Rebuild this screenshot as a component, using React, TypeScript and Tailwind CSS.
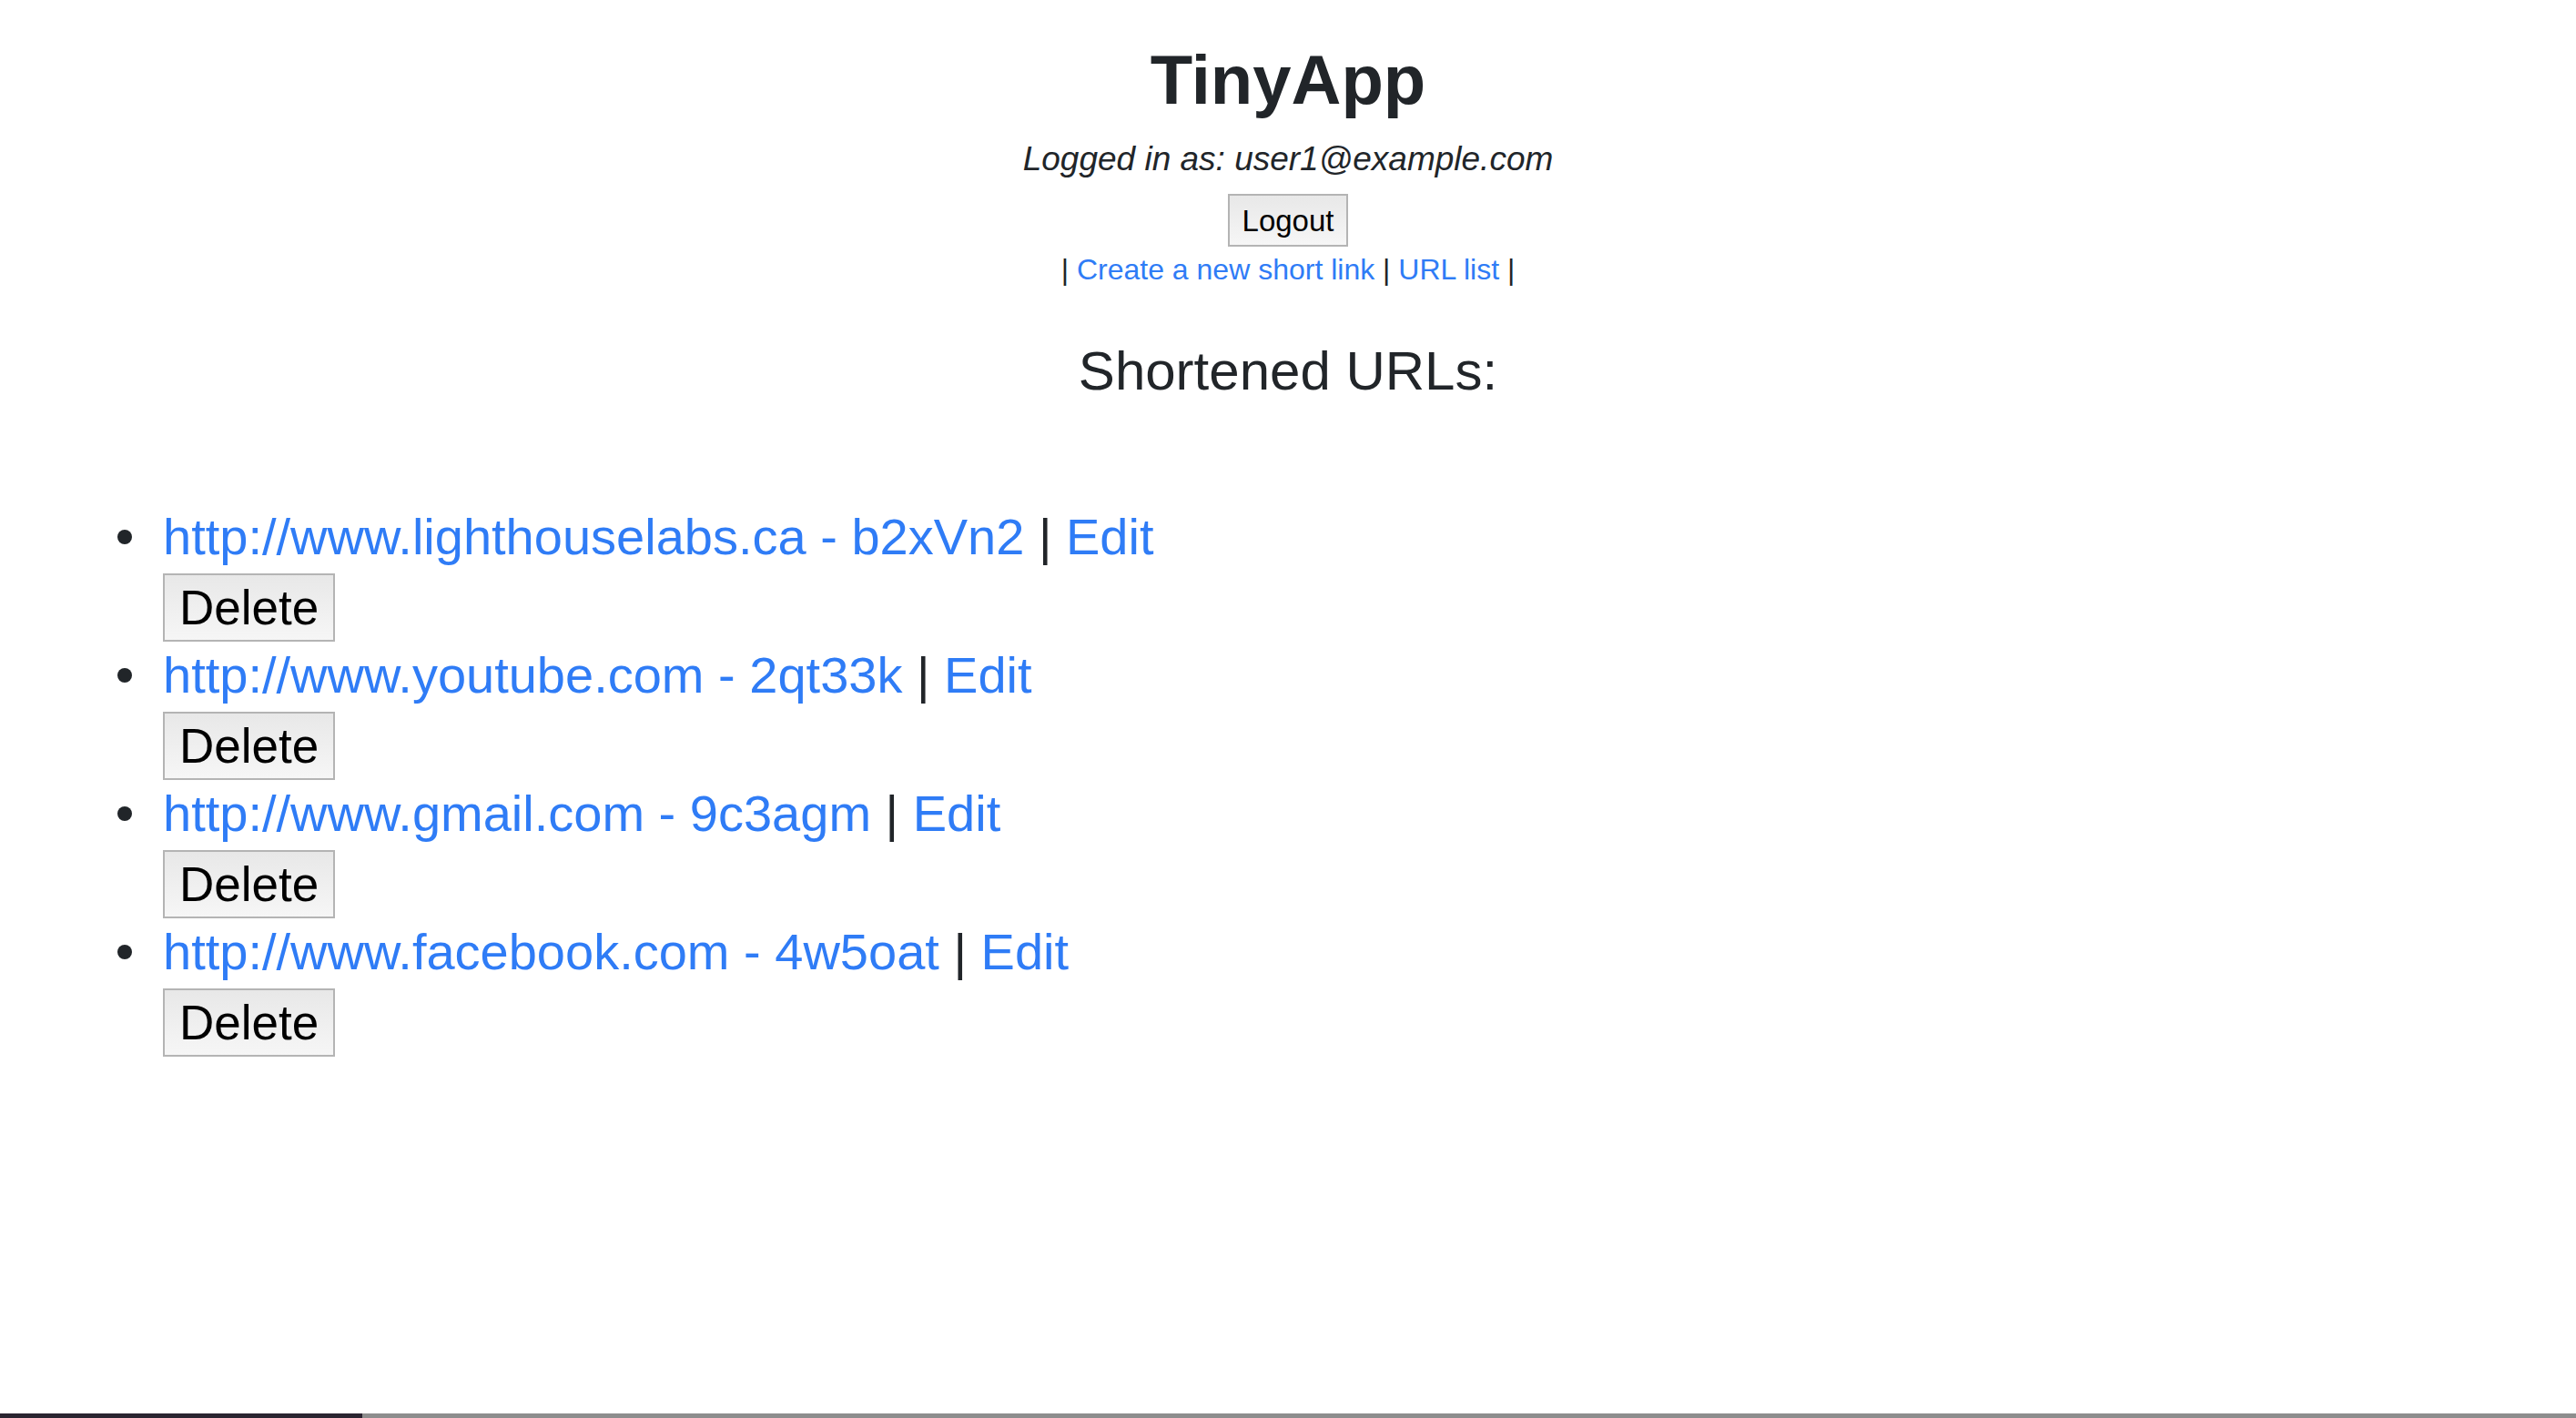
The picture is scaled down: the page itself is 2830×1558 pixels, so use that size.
const urls = [
  { longURL: 'http://www.lighthouselabs.ca', short: 'b2xVn2' },
  { longURL: 'http://www.youtube.com', short: '2qt33k' },
  { longURL: 'http://www.gmail.com', short: '9c3agm' },
  { longURL: 'http://www.facebook.com', short: '4w5oat' },
]

export default function App() {
  return (
    <div className="flex h-screen flex-col bg-white font-['Liberation_Sans',Arial,sans-serif] text-[#212529]">
      {/* Header */}
      <header className="flex flex-col items-center pt-[43px]">
        <h1 className="text-[76px] font-bold leading-[90px]">TinyApp</h1>
        <p className="mt-[17px] text-[37px] italic leading-[50px]">
          Logged in as: user1@example.com
        </p>
        <button className="mt-[13px] h-[58px] border-2 border-[#b4b4b4] bg-gradient-to-b from-[#e8e8e8] to-[#f6f6f6] px-[14px] text-[33px] leading-none text-black">
          Logout
        </button>
        <nav className="mt-[3px] text-[32px] leading-[44px]">
          | <a href="#" className="text-[#2f7cf6]">Create a new short link</a> |{' '}
          <a href="#" className="text-[#2f7cf6]">URL list</a> |
        </nav>
      </header>

      <h3 className="mt-[55px] text-center text-[60px] leading-[70px]">Shortened URLs:</h3>

      {/* URL list */}
      <ul className="ml-[123px] mt-[110px]">
        {urls.map((u) => (
          <li key={u.short} className="flex">
            <div className="flex h-[73px] w-[56px] items-center">
              <span className="ml-[6px] h-[16px] w-[16px] rounded-full bg-[#212529]" />
            </div>
            <div className="flex flex-col items-start">
              <div className="whitespace-nowrap text-[56px] leading-[73px]">
                <a href="#" className="text-[#2f7cf6]">
                  {u.longURL} - {u.short}
                </a>{' '}
                |{' '}
                <a href="#" className="text-[#2f7cf6]">
                  Edit
                </a>
              </div>
              <button className="mt-[4px] h-[75px] border-2 border-[#b4b4b4] bg-gradient-to-b from-[#e8e8e8] to-[#f6f6f6] px-[16px] text-[53px] leading-none text-black">
                Delete
              </button>
            </div>
          </li>
        ))}
      </ul>

      {/* window edge */}
      <div className="mt-auto flex h-[5px]">
        <div className="w-[398px] bg-[#2a2430]" />
        <div className="flex-1 bg-[#8d8d8d]" />
      </div>
    </div>
  )
}
